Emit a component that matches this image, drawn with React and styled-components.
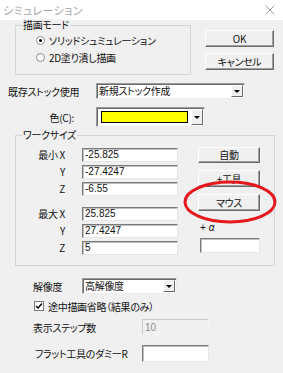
import React from 'react';
import styled, { createGlobalStyle } from 'styled-components';

const GlobalStyle = createGlobalStyle`
  html, body { margin: 0; padding: 0; background: #f0f0f0; }
  body {
    font-family: "Noto Sans CJK JP", "Noto Sans", sans-serif;
    font-size: 10px;
    font-feature-settings: "palt";
    letter-spacing: -0.3px;
    color: #111;
  }
`;

const Window = styled.div`
  position: relative;
  width: 283px;
  height: 373px;
  background: #f0f0f0;
  overflow: hidden;
`;

const TitleBar = styled.div`
  height: 20px;
  background: #fff;
  display: flex;
  align-items: center;
  justify-content: space-between;
  padding: 0 8px 0 3px;
`;

const Title = styled.span`
  font-size: 11px;
  line-height: 12px;
  color: #a8a8a8;
  letter-spacing: 0.4px;
`;

const TopSection = styled.div`
  display: flex;
  align-items: flex-start;
  margin-top: 5px;
`;

const GroupBox = styled.div`
  position: relative;
  box-sizing: border-box;
  width: ${p => p.$w}px;
  height: ${p => p.$h}px;
  margin: ${p => p.$mt || 0}px 0 0 15px;
  border: 1px solid #d5d5d5;
`;

const Legend = styled.span`
  position: absolute;
  top: -7px;
  left: 6px;
  padding: 0 1px;
  line-height: 12px;
  background: #f0f0f0;
`;

const RadioList = styled.div`
  display: flex;
  flex-direction: column;
  padding: 6px 0 0 20px;
`;

const Option = styled.label`
  display: flex;
  align-items: center;
  gap: 4px;
  height: 17px;
`;

const RadioDot = styled.span`
  box-sizing: border-box;
  width: 9px;
  height: 9px;
  border-radius: 50%;
  border: 1px solid #8a8a8a;
  background: #fff;
  display: flex;
  align-items: center;
  justify-content: center;
  &::after {
    content: '';
    width: 3px;
    height: 3px;
    border-radius: 50%;
    background: ${p => (p.$on ? '#000' : 'transparent')};
  }
`;

const ButtonColumn = styled.div`
  display: flex;
  flex-direction: column;
  gap: ${p => p.$gap || 6}px;
  margin-left: ${p => p.$ml}px;
  padding-top: ${p => p.$pt}px;
`;

const Button = styled.button`
  box-sizing: border-box;
  width: ${p => p.$w}px;
  height: ${p => p.$h || 16}px;
  padding: 0;
  font: inherit;
  font-feature-settings: "palt";
  letter-spacing: inherit;
  line-height: 12px;
  color: #111;
  background: #f0f0f0;
  border: 1px solid;
  border-color: #fff #696969 #696969 #fff;
  box-shadow: inset -1px -1px 0 #a0a0a0;
`;

const Row = styled.div`
  display: flex;
  align-items: center;
  height: ${p => p.$h}px;
  margin-top: ${p => p.$mt}px;
  padding-left: ${p => p.$pl}px;
`;

const Label = styled.span`
  box-sizing: border-box;
  width: ${p => p.$w}px;
  flex: none;
  text-align: ${p => (p.$right ? 'right' : 'left')};
  padding-right: ${p => p.$pr || 0}px;
  white-space: nowrap;
`;

const Combo = styled.div`
  box-sizing: border-box;
  display: flex;
  align-items: center;
  width: ${p => p.$w}px;
  height: ${p => p.$h || 16}px;
  background: #fff;
  border: 1px solid;
  border-color: #9a9a9a #ececec #ececec #9a9a9a;
  box-shadow: inset 1px 1px 0 #6a6a6a;
`;

const ComboText = styled.span`
  flex: 1;
  padding-left: 2px;
  line-height: 14px;
  white-space: nowrap;
`;

const Swatch = styled.span`
  flex: 1;
  height: 10px;
  margin: 0 3px 0 4px;
  background: #ffff00;
  border: 1px solid #000;
`;

const DropButton = styled.span`
  box-sizing: border-box;
  flex: none;
  width: 12px;
  height: ${p => p.$h || 12}px;
  margin-right: 1px;
  display: flex;
  align-items: center;
  justify-content: center;
  background: #f0f0f0;
  border: 1px solid;
  border-color: #fff #696969 #696969 #fff;
  &::after {
    content: '';
    border-left: 3px solid transparent;
    border-right: 3px solid transparent;
    border-top: 3px solid #000;
  }
`;

const WorkBody = styled.div`
  display: flex;
  padding-top: 10px;
`;

const FieldList = styled.div`
  display: flex;
  flex-direction: column;
`;

const FieldRow = styled.div`
  display: flex;
  align-items: center;
  height: 17px;
  margin-top: ${p => p.$mt || 0}px;
`;

const TextInput = styled.div`
  box-sizing: border-box;
  width: ${p => p.$w}px;
  height: ${p => p.$h || 14}px;
  margin-left: ${p => p.$ml || 0}px;
  margin-top: ${p => p.$mt || 0}px;
  padding-left: 2px;
  display: flex;
  align-items: center;
  font-family: "Liberation Sans", "Noto Sans CJK JP", sans-serif;
  font-size: 10px;
  letter-spacing: 0;
  color: ${p => (p.$disabled ? '#8c8c8c' : '#111')};
  background: ${p => (p.$disabled ? '#f0f0f0' : '#fff')};
  border: 1px solid;
  border-color: ${p => (p.$disabled ? '#c8c8c8 #f4f4f4 #f4f4f4 #c8c8c8' : '#7a7a7a #e6e6e6 #e6e6e6 #7a7a7a')};
  box-shadow: ${p => (p.$disabled ? 'none' : 'inset 1px 1px 0 #c0c0c0')};
`;

const SideColumn = styled.div`
  display: flex;
  flex-direction: column;
  margin-left: 20px;
  padding-top: 1px;
`;

const AlphaLabel = styled.span`
  margin: 11px 0 0 2px;
  line-height: 12px;
  font-family: "Liberation Sans", "Noto Sans CJK JP", sans-serif;
  letter-spacing: 0;
  i { font-style: italic; }
`;

const CheckBox = styled.span`
  box-sizing: border-box;
  width: 10px;
  height: 10px;
  border: 1px solid #7a7a7a;
  background: #fff;
  display: flex;
  align-items: center;
  justify-content: center;
  margin-right: 4px;
`;

const Overlay = styled.svg`
  position: absolute;
  left: 183px;
  top: 180px;
  pointer-events: none;
`;

const CloseIcon = () => (
  <svg width="10" height="10" viewBox="0 0 10 10">
    <path d="M0.5 0.5 L9.5 9.5 M9.5 0.5 L0.5 9.5" stroke="#9a9a9a" strokeWidth="1" fill="none" />
  </svg>
);

const workRows = [
  { label: '最小 X', value: '-25.825' },
  { label: 'Y', value: '-27.4247' },
  { label: 'Z', value: '-6.55' },
  { label: '最大 X', value: '25.825', gap: 8 },
  { label: 'Y', value: '27.4247' },
  { label: 'Z', value: '5' },
];

export default function App() {
  return (
    <Window>
      <GlobalStyle />
      <TitleBar>
        <Title>シミュレーション</Title>
        <CloseIcon />
      </TitleBar>

      <TopSection>
        <GroupBox $w={176} $h={50}>
          <Legend>描画モード</Legend>
          <RadioList>
            <Option><RadioDot $on />ソリッドシュミュレーション</Option>
            <Option><RadioDot />2D塗り潰し描画</Option>
          </RadioList>
        </GroupBox>
        <ButtonColumn $ml={14} $pt={5}>
          <Button $w={69} $h={17}>OK</Button>
          <Button $w={69} $h={17}>キャンセル</Button>
        </ButtonColumn>
      </TopSection>

      <Row $h={16} $mt={8} $pl={8}>
        <Label $w={88}>既存ストック使用</Label>
        <Combo $w={149}>
          <ComboText>新規ストック作成</ComboText>
          <DropButton />
        </Combo>
      </Row>

      <Row $h={20} $mt={8} $pl={8}>
        <Label $w={88} $right $pr={22}>色(C):</Label>
        <Combo $w={109} $h={20}>
          <Swatch />
          <DropButton $h={16} />
        </Combo>
      </Row>

      <GroupBox $w={260} $h={131} $mt={8}>
        <Legend>ワークサイズ</Legend>
        <WorkBody>
          <FieldList>
            {workRows.map((r, i) => (
              <FieldRow key={i} $mt={r.gap}>
                <Label $w={49} $right>{r.label}</Label>
                <TextInput $w={96} $ml={17}>{r.value}</TextInput>
              </FieldRow>
            ))}
          </FieldList>
          <SideColumn>
            <ButtonColumn $ml={0} $pt={0} $gap={7}>
              <Button $w={62} $h={16}>自動</Button>
              <Button $w={62} $h={17}>+工具</Button>
              <Button $w={62} $h={17}>マウス</Button>
            </ButtonColumn>
            <AlphaLabel>+ <i>α</i></AlphaLabel>
            <TextInput $w={60} $h={15} $ml={2} $mt={4} />
          </SideColumn>
        </WorkBody>
      </GroupBox>

      <Row $h={16} $mt={12} $pl={33}>
        <Label $w={49}>解像度</Label>
        <Combo $w={95}>
          <ComboText>高解像度</ComboText>
          <DropButton />
        </Combo>
      </Row>

      <Row $h={12} $mt={6} $pl={34}>
        <CheckBox>
          <svg width="8" height="8" viewBox="0 0 8 8">
            <path d="M1 4 L3 6 L7 1.5" stroke="#000" strokeWidth="1.4" fill="none" />
          </svg>
        </CheckBox>
        途中描画省略（結果のみ）
      </Row>

      <Row $h={16} $mt={7} $pl={33}>
        <Label $w={109}>表示ステップ数</Label>
        <TextInput $w={67} $h={16} $disabled>10</TextInput>
      </Row>

      <Row $h={17} $mt={10} $pl={35}>
        <Label $w={107}>フラット工具のダミーR</Label>
        <TextInput $w={67} $h={17} />
      </Row>

      <Overlay width="94" height="44" viewBox="0 0 94 44">
        <ellipse cx="47" cy="22" rx="45" ry="20" stroke="#e3191c" strokeWidth="3" fill="none" />
      </Overlay>
    </Window>
  );
}
